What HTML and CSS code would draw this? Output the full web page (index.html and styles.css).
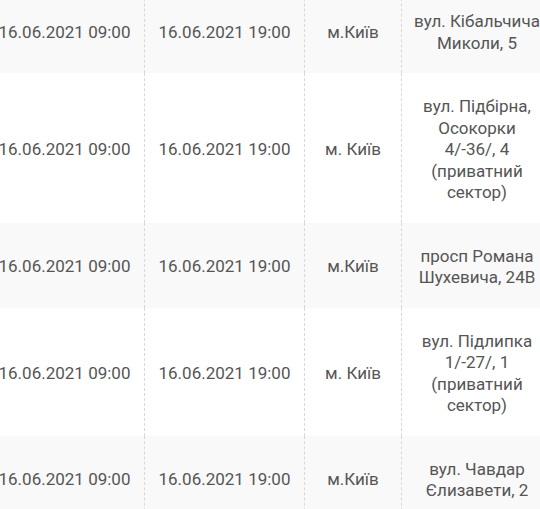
FILE: index.html
```html
<!DOCTYPE html>
<html lang="uk">
<head>
<meta charset="utf-8">
<link rel="stylesheet" href="styles.css">
</head>
<body>
<div class="table">
  <div class="row alt">
    <div class="cell">16.06.2021 09:00</div>
    <div class="cell">16.06.2021 19:00</div>
    <div class="cell">м.Київ</div>
    <div class="cell last">вул. Кібальчича Миколи, 5</div>
  </div>
  <div class="row">
    <div class="cell">16.06.2021 09:00</div>
    <div class="cell">16.06.2021 19:00</div>
    <div class="cell">м. Київ</div>
    <div class="cell last">вул. Підбірна, Осокорки 4/-36/, 4 (приватний сектор)</div>
  </div>
  <div class="row alt">
    <div class="cell">16.06.2021 09:00</div>
    <div class="cell">16.06.2021 19:00</div>
    <div class="cell">м.Київ</div>
    <div class="cell last">просп Романа Шухевича, 24В</div>
  </div>
  <div class="row">
    <div class="cell">16.06.2021 09:00</div>
    <div class="cell">16.06.2021 19:00</div>
    <div class="cell">м. Київ</div>
    <div class="cell last">вул. Підлипка 1/-27/, 1 (приватний сектор)</div>
  </div>
  <div class="row alt">
    <div class="cell">16.06.2021 09:00</div>
    <div class="cell">16.06.2021 19:00</div>
    <div class="cell">м.Київ</div>
    <div class="cell last">вул. Чавдар Єлизавети, 2</div>
  </div>
</div>
</body>
</html>
```

FILE: styles.css
```css
html, body {
  margin: 0;
  padding: 0;
  background: #ffffff;
  overflow: hidden;
}

.table {
  margin-left: -15px;
  margin-top: -12px;
  font-family: Roboto, "Liberation Sans", sans-serif;
  font-size: 17px;
  line-height: 21.5px;
  color: #555;
}

.row {
  display: grid;
  grid-template-columns: 160px 160px 97px 150px;
  background: #ffffff;
}

.row.alt {
  background: #f9f9f9;
}

.cell {
  display: flex;
  align-items: center;
  justify-content: center;
  text-align: center;
  padding: 23px 10px 19px;
  border-right: 1px dashed #d8d8d8;
  white-space: nowrap;
}

.cell.last {
  border-right: none;
  white-space: normal;
}
```
